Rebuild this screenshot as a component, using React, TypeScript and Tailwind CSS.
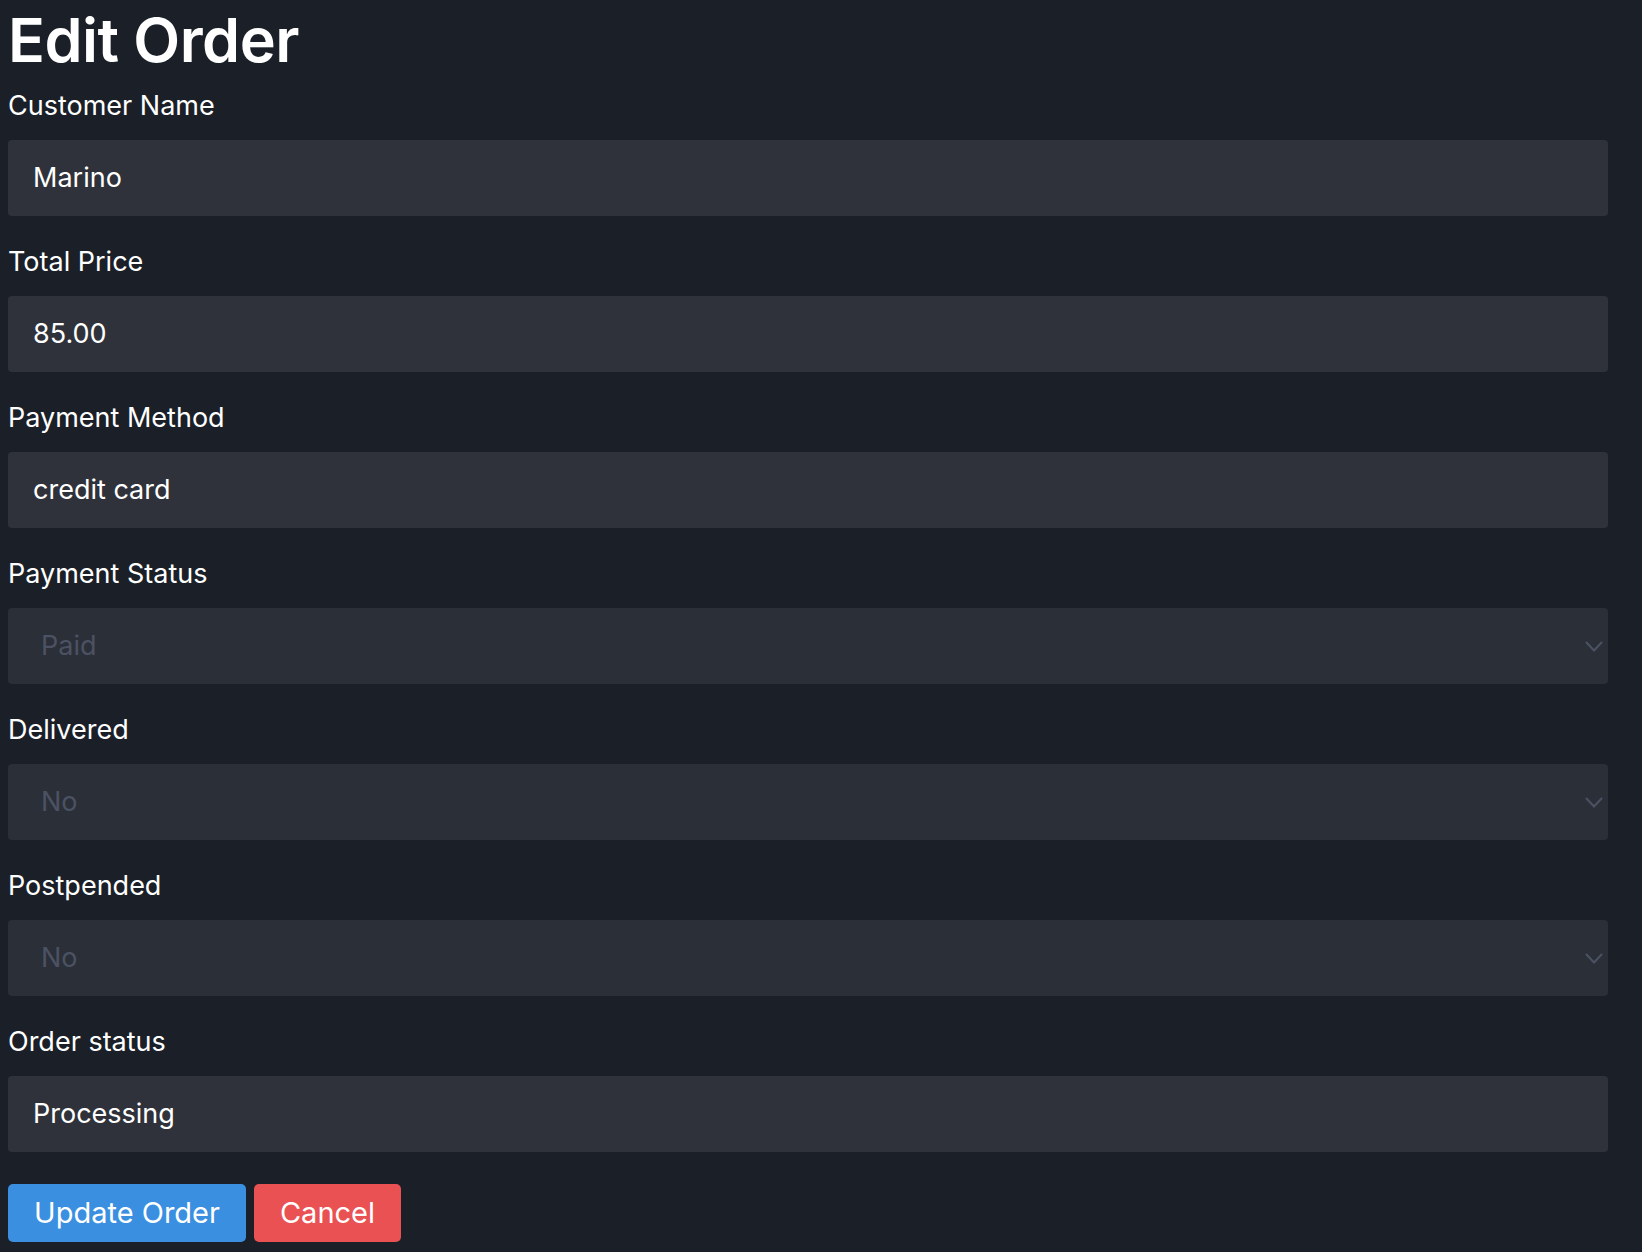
type Field =
  | { label: string; kind: 'input'; value: string }
  | { label: string; kind: 'select'; value: string };

const fields: Field[] = [
  { label: 'Customer Name', kind: 'input', value: 'Marino' },
  { label: 'Total Price', kind: 'input', value: '85.00' },
  { label: 'Payment Method', kind: 'input', value: 'credit card' },
  { label: 'Payment Status', kind: 'select', value: 'Paid' },
  { label: 'Delivered', kind: 'select', value: 'No' },
  { label: 'Postpended', kind: 'select', value: 'No' },
  { label: 'Order status', kind: 'input', value: 'Processing' },
];

export default function App() {
  return (
    <div className="min-h-[1252px] bg-[#1b2028] px-[8px] pt-[10px] text-white [font-family:Inter,'Noto_Sans',sans-serif]">
      <div className="w-[1600px]">
        <h1 className="h-[50px] text-[61px] font-semibold leading-[60px] tracking-[-0.5px]">Edit Order</h1>
        <form className="flex flex-col">
          {fields.map((f) => (
            <div key={f.label} className="flex h-[156px] flex-col">
              <label className="h-[80px] pt-[31px] text-[27px] leading-[30px]">{f.label}</label>
              {f.kind === 'input' ? (
                <div className="flex h-[76px] items-center rounded-[4px] bg-[#2f323a] pl-[25px] text-[27px]">
                  {f.value}
                </div>
              ) : (
                <div className="flex h-[76px] items-center justify-between rounded-[4px] bg-[#2b2f38] pl-[33px] pr-[5px] text-[27px] text-[#4b5263]">
                  <span>{f.value}</span>
                  <svg width="18" height="11" viewBox="0 0 18 11" fill="none" stroke="#4b5263" strokeWidth="2">
                    <polyline points="1,1 9,9.5 17,1" />
                  </svg>
                </div>
              )}
            </div>
          ))}
          <div className="mt-[32px] flex gap-[8px]">
            <button type="button" className="h-[58px] w-[238px] rounded-[5px] bg-[#3a8fe1] text-[29px]">
              Update Order
            </button>
            <button type="button" className="h-[58px] w-[147px] rounded-[5px] bg-[#ea5152] text-[29px]">
              Cancel
            </button>
          </div>
        </form>
      </div>
    </div>
  );
}
